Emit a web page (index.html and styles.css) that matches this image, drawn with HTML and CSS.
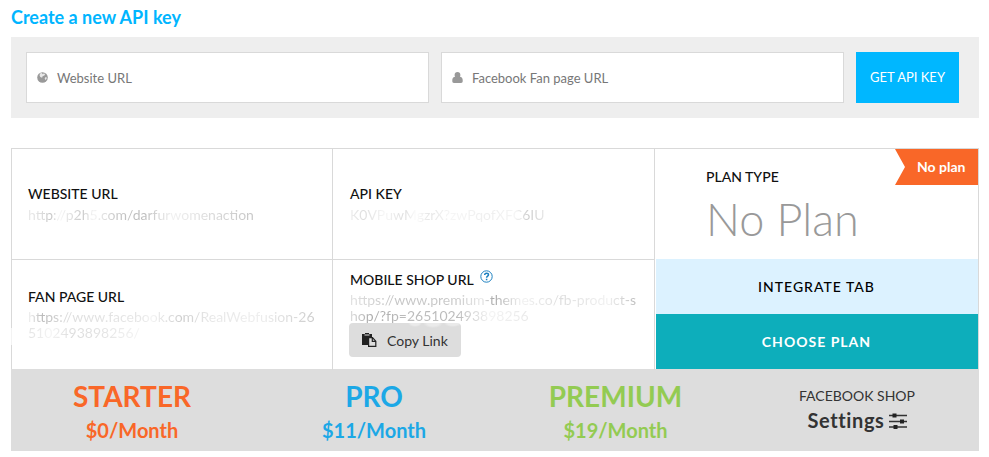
FILE: index.html
```html
<!DOCTYPE html>
<html lang="en">
<head>
<meta charset="utf-8">
<title>API key</title>
<link rel="stylesheet" href="styles.css">
</head>
<body>
<h1 class="title"><span>Create a new API key</span></h1>
<form class="key-form">
  <label class="field">
    <svg class="field-icon" viewBox="0 0 11 11"><circle cx="5.500" cy="5.500" r="5.300" fill="#999"/><path d="M3 1.400 5 1l.5 1.300 1.200-.8 1.500.5-.8 1.600-1.800.6-.5 1.500-1.800-.6-.7-1.600zM8.600 5l1.200.4-.3 1.600-1.200 1-.6-1.600z" fill="#e8e8e8"/></svg>
    <span class="field-text">Website URL</span>
  </label>
  <label class="field">
    <svg class="field-icon" viewBox="0 0 11 11"><path d="M5.500 0C7.300 0 8.400 1.300 8.400 3c0 .8-.2 1.300-.5 1.800C9.600 5 10.700 6.300 10.700 8v1.300c0 1-.6 1.600-1.600 1.600H1.900C.9 10.900.3 10.300.3 9.300V8C.3 6.300 1.400 5 3.100 4.800 2.800 4.300 2.600 3.800 2.600 3 2.600 1.300 3.700 0 5.500 0z" fill="#999"/></svg>
    <span class="field-text">Facebook Fan page URL</span>
  </label>
  <button class="get-key" type="button"><span>GET API KEY</span></button>
</form>
<section class="board">
  <div class="cell cell-web">
    <h2><span>WEBSITE URL</span></h2>
    <p><span class="faded f-web">http://p2h5.com/darfurwomenaction</span></p>
  </div>
  <div class="cell cell-key">
    <h2><span>API KEY</span></h2>
    <p><span class="faded f-key">K0VPuwMgzrX?zwPqofXFC6IU</span></p>
  </div>
  <div class="cell cell-fan">
    <h2><span>FAN PAGE URL</span></h2>
    <p><span class="faded f-fan1">https://www.facebook.com/RealWebfusion-26</span><br><span class="faded f-fan2">5102493898256/</span></p>
  </div>
  <div class="cell cell-shop">
    <h2><span>MOBILE SHOP URL</span><svg class="help" viewBox="0 0 13 13"><circle cx="6.500" cy="6.500" r="5.700" fill="none" stroke="#1d80c0" stroke-width="1"/><path d="M4.700 5c0-2.400 3.800-2.200 3.800-.2 0 1.300-1.900 1.300-1.900 2.900M6.600 8.800v1.400" fill="none" stroke="#1d80c0" stroke-width="1.500"/></svg></h2>
    <p><span class="faded f-shop1">https://www.premium-themes.co/fb-product-s</span><br><span class="faded f-shop2">hop/?fp=265102493898256</span></p>
    <button class="copy" type="button"><svg class="copy-icon" viewBox="0 0 15 14"><path d="M0 1h3V0h4v1h3v3H6v8H0z" fill="#222"/><path d="M2.500 2h5" stroke="#ddd"/><path d="M6.600 4.600h3.900l3.300 3.600v5.200H6.600zM10.300 4.600v3.800h3.500" fill="#ddd" stroke="#222" stroke-width="1.200"/></svg><span>Copy Link</span></button>
  </div>
  <aside class="plan">
    <div class="plan-info">
      <span class="ribbon"><span>No plan</span></span>
      <h2><span>PLAN TYPE</span></h2>
      <div class="plan-name"><span>No Plan</span></div>
    </div>
    <a class="action integrate"><span>INTEGRATE TAB</span></a>
    <a class="action choose"><span>CHOOSE PLAN</span></a>
  </aside>
</section>
<footer class="tiers">
  <div class="tier starter"><strong><span>STARTER</span></strong><em><span>$0/Month</span></em></div>
  <div class="tier pro"><strong><span>PRO</span></strong><em><span>$11/Month</span></em></div>
  <div class="tier premium"><strong><span>PREMIUM</span></strong><em><span>$19/Month</span></em></div>
  <div class="tier shop"><small><span>FACEBOOK SHOP</span></small><em><span class="settings">Settings</span><svg class="sliders" viewBox="0 0 18 16"><path d="M0 2.500h18M0 8.500h18M0 14h18" stroke="#333" stroke-width="1.300"/><path d="M3.500.5h4v4h-4zM11 6.500h4v4h-4zM4.500 12h4v4h-4z" fill="#222"/></svg></em></div>
</footer>
</body>
</html>
```
FILE: styles.css
```css
* { box-sizing: border-box; }
body { margin: 0; padding: 5px 10px 0 11px; height: 457px; overflow: hidden; background: #fff; color: #111; font-family: Lato, "Liberation Sans", sans-serif; font-size: 14px; }
h1, h2, p { margin: 0; }
.title { height: 32px; font-size: 18px; line-height: 24px; font-weight: 700; color: #00b5ff; }
.key-form { display: flex; gap: 12px; width: 968px; height: 81px; padding: 15px; background: #eee; }
.field { display: flex; align-items: center; width: 403px; height: 51px; padding-left: 10px; border: 1px solid #d9d9d9; background: #fff; }
.field-icon { width: 11px; height: 11px; margin-right: 9px; }
.field-text { font-size: 13px; color: #777; }
.get-key { width: 103px; height: 51px; padding: 0 0 1px; border: 0; background: #00b7ff; color: #fff; font: 400 13px Lato, sans-serif; }
.board { display: grid; grid-template-columns: 321px 322px 323px; grid-template-rows: 111px 110px; width: 968px; height: 221px; margin-top: 30px; border: 1px solid #d9d9d9; border-bottom: 0; }
.cell { border-bottom: 1px solid #d9d9d9; padding-left: 16px; }
.cell-key, .cell-shop { width: 323px; margin-left: -1px; padding-left: 17px; border-left: 1px solid #d9d9d9; border-right: 1px solid #d9d9d9; }
.cell-fan, .cell-shop { border-bottom: 0; }
.cell-web, .cell-key { padding-top: 34px; }
.cell-fan { position: relative; padding-top: 26px; }
.cell-fan::before { content: ""; position: absolute; left: -1px; top: 68px; width: 1px; height: 17px; background: #f3f3f3; }
.cell-shop { padding-top: 9px; }
h2 { height: 20px; font-size: 14px; line-height: 22px; font-weight: 500; white-space: nowrap; }
.cell p { font-size: 14px; line-height: 16px; padding-top: 3px; white-space: nowrap; }
.cell-web p, .cell-key p { padding-top: 4px; }
.faded { color: transparent; background-clip: text; -webkit-background-clip: text; background-image: linear-gradient(90deg, #e9e9e9, #ddd 6%, #c5c5c5 10%, #f6f6f6 14%, #c9c9c9 24%, #f5f5f5 29%, #c6c6c6 39%, #bbb 51%, #f1f1f1 64%, #ddd 78%, #c6c6c6); }
.f-key { background-image: linear-gradient(90deg, #eee, #ddd 7%, #f7f7f7 18%, #ddd 28%, #fcfcfc 34%, #e5e5e5 41%, #f6f6f6 52%, #eee 72%, #f5f5f5 85%, #ccc 92%, #e7e7e7); }
.f-fan1 { background-image: linear-gradient(90deg, #f2f2f2, #bbb 5%, #ddd 14%, #e7e7e7 40%, #f3f3f3 43%, #ccc 54%, #e6e6e6 62%, #eee 80%, #ccc); }
.f-fan2 { background-image: linear-gradient(90deg, #e2e2e2, #f5f5f5 20%, #ddd 38%, #e1e1e1 60%, #f3f3f3); }
.f-shop1 { background-image: linear-gradient(90deg, #e2e2e2, #c5c5c5 15%, #c9c9c9 37%, #e8e8e8 46%, #aaa 50%, #f1f1f1 60%, #ddd 74%, #f1f1f1 90%, #bbb); }
.f-shop2 { background-image: linear-gradient(90deg, #ddd, #aaa 12%, #bbb 30%, #bbb 60%, #f3f3f3 78%, #e9e9e9); }
.help { width: 13px; height: 13px; margin-left: 6px; vertical-align: 2px; }
.copy { display: flex; align-items: center; width: 112px; height: 34px; margin: -1px 0 0 -1px; padding: 0 0 0 13px; border: 0; border-radius: 4px; background: radial-gradient(ellipse 7px 4px at 66px 0, #eaeaea 60%, transparent), radial-gradient(ellipse 10px 5px at 84px 0, #eaeaea 60%, transparent), radial-gradient(ellipse 9px 4px at 104px 0, #eaeaea 60%, transparent), #ddd; color: #333; font: 400 14px Lato, sans-serif; white-space: nowrap; }
.copy-icon { width: 15px; height: 14px; margin-right: 10px; }
.plan { grid-column: 3; grid-row: 1 / 3; margin-left: 1px; }
.plan-info { position: relative; height: 110px; padding: 17px 0 0 50px; }
.plan-name { margin-top: 3px; font-size: 45px; line-height: 60px; height: 60px; font-weight: 300; color: #999; white-space: nowrap; }
.ribbon { position: absolute; top: 0; right: 0; width: 83px; height: 36px; padding-left: 22px; background: #f96728; clip-path: polygon(0 0, 100% 0, 100% 100%, 0 100%, 10px 50%); color: #fff; font-size: 14px; line-height: 36px; font-weight: 700; white-space: nowrap; }
.action { display: flex; align-items: center; justify-content: center; height: 55px; padding-right: 1px; letter-spacing: 1px; font-size: 14px; white-space: nowrap; }
.integrate { background: #dcf2ff; color: #000; font-weight: 500; }
.choose { background: #0daebb; color: #fff; font-weight: 700; }
.tiers { display: grid; grid-template-columns: 242px 242px 242px 242px; width: 968px; height: 82px; background: #ddd; text-align: center; white-space: nowrap; }
.tier { padding-top: 9px; }
.tier strong { display: block; height: 36px; font-size: 28px; line-height: 36px; font-weight: 700; }
.tier em { display: block; height: 30px; font-size: 20px; line-height: 32px; font-weight: 700; font-style: normal; }
.starter { color: #f96728; }
.pro { color: #1ca8e6; }
.premium { padding-right: 1px; color: #93cb52; }
.shop { color: #333; }
.shop small { display: block; height: 18px; margin: 8px 2px 0 0; font-size: 14px; line-height: 20px; }
.settings { font-variant-ligatures: none; letter-spacing: .6px; }
.sliders { width: 18px; height: 16px; margin: 0 1px 0 5px; vertical-align: -1px; }
```
